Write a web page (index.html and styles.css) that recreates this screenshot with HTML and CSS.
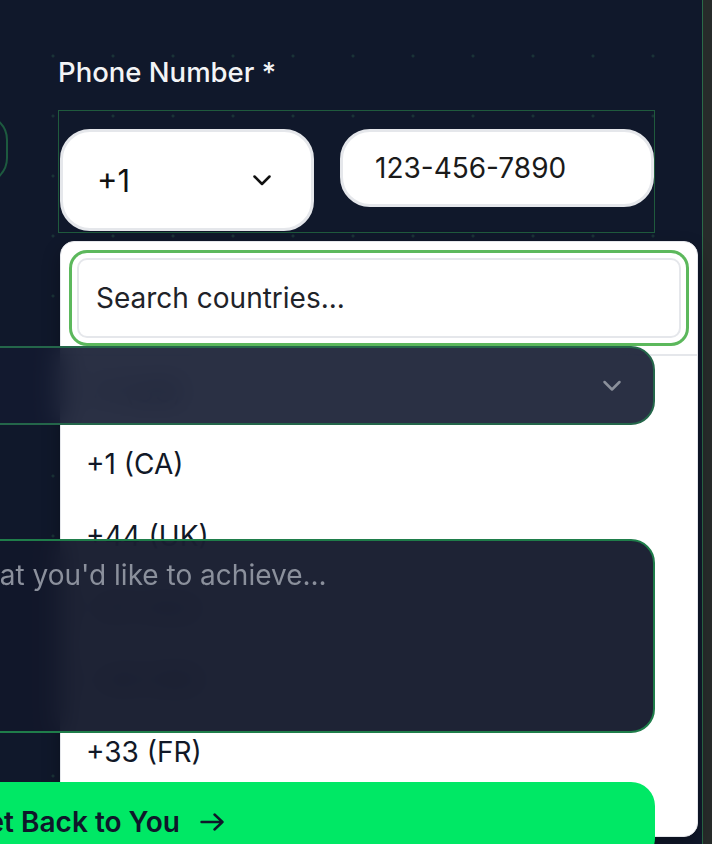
FILE: index.html
```html
<!DOCTYPE html>
<html lang="en">
<head>
<meta charset="utf-8">
<title>Contact form</title>
<link rel="stylesheet" href="styles.css">
</head>
<body>
<div class="viewport">
  <main class="canvas">
    <form class="form">
      <div class="row-two">
        <div class="field">
          <label class="label label-left">Company Name</label>
          <input class="dark-input" type="text">
        </div>
        <div class="field">
          <label class="label label-phone">Phone Number *</label>
          <div class="phone-box">
            <div class="code-wrap">
              <button type="button" class="code-btn">
                <span>+1</span>
                <svg class="chev" width="20" height="12" viewBox="0 0 20 12"><path d="M2.5 2.5 10 10l7.5-7.5" fill="none" stroke="#111" stroke-width="2.5" stroke-linecap="round" stroke-linejoin="round"/></svg>
              </button>
              <div class="dropdown">
                <div class="search-wrap">
                  <input class="search" type="text" placeholder="Search countries...">
                </div>
                <ul class="options">
                  <li>+1 (US)</li>
                  <li>+1 (CA)</li>
                  <li>+44 (UK)</li>
                  <li>+61 (AU)</li>
                  <li>+49 (DE)</li>
                  <li>+33 (FR)</li>
                </ul>
              </div>
            </div>
            <input class="phone-input" type="tel" value="123-456-7890">
          </div>
        </div>
      </div>

      <div class="field row-full row-select">
        <label class="label label-full">Service Interested In</label>
        <div class="select-dark">
          <svg width="20" height="12" viewBox="0 0 20 12"><path d="M2.5 2 10 9.5 17.5 2" fill="none" stroke="#8b909b" stroke-width="2.5" stroke-linecap="round" stroke-linejoin="round"/></svg>
        </div>
      </div>

      <div class="field row-full row-text">
        <label class="label label-full">Project Details</label>
        <textarea class="textarea-dark" placeholder="Tell us about your business goals and what you'd like to achieve..."></textarea>
      </div>

      <button type="button" class="submit">
        <span>We'll Get Back to You</span>
        <svg width="24" height="18" viewBox="0 0 24 18"><path d="M1.5 9h21M14.5 1.5 22.5 9l-8 7.5" fill="none" stroke="#0f172a" stroke-width="2.4" stroke-linecap="round" stroke-linejoin="round"/></svg>
      </button>
    </form>
  </main>
  <div class="edge"></div>
</div>
</body>
</html>
```

FILE: styles.css
```css
* { box-sizing: border-box; }

html, body {
  margin: 0;
  padding: 0;
}

body {
  background: #10182b;
  font-family: Inter, "Noto Sans", sans-serif;
  overflow: hidden;
}

.viewport {
  display: flex;
  width: 712px;
  height: 844px;
  overflow: hidden;
}

.canvas {
  flex: 1;
  position: relative;
  background-color: #10182b;
  background-image: radial-gradient(circle, rgba(40, 92, 72, 0.4) 1.1px, transparent 1.9px);
  background-size: 60px 60px;
  background-position: 23px 26px;
  padding-top: 54px;
}

.edge {
  width: 10px;
  flex: none;
  background: #272b2a;
  border-left: 1px solid #2a6a48;
}

.form {
  margin-left: -592px;
  width: 1247px;
}

.row-two {
  display: grid;
  grid-template-columns: 600px 597px;
  column-gap: 50px;
  align-items: start;
}

.field {
  display: flex;
  flex-direction: column;
}

.label {
  display: block;
  font-size: 27.5px;
  line-height: 36px;
  font-weight: 500;
  color: #f3f4f6;
}

.label-left { margin-bottom: 24px; }
.label-phone { margin-bottom: 20px; }
.label-full { margin-bottom: 20px; }

.dark-input {
  width: 100%;
  height: 70px;
  border: 2px solid #1d5a3f;
  border-radius: 26px;
  background: transparent;
  outline: none;
}

.phone-box {
  display: flex;
  align-items: flex-start;
  gap: 26px;
  border: 1px solid #1f5a3d;
  padding: 18px 0 1px 1px;
}

.code-wrap {
  position: relative;
  width: 254px;
  flex: none;
}

.code-btn {
  width: 254px;
  height: 102px;
  background: #fff;
  border: 3px solid #e5e7eb;
  border-radius: 30px;
  display: flex;
  align-items: center;
  justify-content: space-between;
  padding: 0 39px 0 34px;
  font-family: Inter, "Noto Sans", sans-serif;
  font-size: 31px;
  font-weight: 400;
  color: #111;
}

.chev { display: block; }

.phone-input {
  flex: 1;
  min-width: 0;
  height: 78px;
  background: #fff;
  border: 3px solid #e5e7eb;
  border-radius: 30px;
  padding: 0 32px;
  font-family: Inter, "Noto Sans", sans-serif;
  font-size: 28px;
  color: #1a1a1a;
  outline: none;
}

.dropdown {
  position: absolute;
  top: calc(100% + 10px);
  left: 0;
  width: 638px;
  height: 596px;
  background: #fff;
  border: 1px solid #e5e7eb;
  border-radius: 14px;
  box-shadow: 0 8px 18px rgba(0, 0, 0, 0.3);
  z-index: 1;
  overflow: hidden;
}

.search-wrap {
  padding: 16px;
  border-bottom: 2px solid #e5e7eb;
}

.search {
  display: block;
  width: 100%;
  height: 80px;
  border: 2px solid #e5e7eb;
  border-radius: 10px;
  padding: 0 17px;
  font-family: Inter, "Noto Sans", sans-serif;
  font-size: 28px;
  color: #1f2937;
  outline: none;
  box-shadow: 0 0 0 5px #fff, 0 0 0 8px #5cb85c;
}

.search::placeholder { color: #1f2329; opacity: 1; }

.options {
  list-style: none;
  margin: 0;
  padding: 0;
}

.options li {
  height: 72px;
  display: flex;
  align-items: center;
  padding-left: 25px;
  font-size: 28px;
  color: #111827;
}

.row-select { margin-top: 57px; }
.row-text { margin-top: 58px; }

.select-dark {
  position: relative;
  z-index: 2;
  height: 79px;
  border: 2px solid #24664a;
  border-radius: 24px;
  background: rgba(19, 25, 48, 0.9);
  -webkit-backdrop-filter: blur(14px);
  backdrop-filter: blur(14px);
  display: flex;
  align-items: center;
  justify-content: flex-end;
  padding-right: 31px;
}

.textarea-dark {
  position: relative;
  z-index: 2;
  display: block;
  width: 100%;
  height: 194px;
  border: 2px solid #1f7d4a;
  border-radius: 24px;
  background: rgba(18, 23, 42, 0.95);
  -webkit-backdrop-filter: blur(14px);
  backdrop-filter: blur(14px);
  padding: 13px 35px 13px 45px;
  font-family: Inter, "Noto Sans", sans-serif;
  font-size: 28px;
  line-height: 42px;
  color: #e5e7eb;
  resize: none;
  outline: none;
}

.textarea-dark::placeholder { color: #8b909c; opacity: 1; }

.submit {
  position: relative;
  z-index: 2;
  width: 100%;
  height: 80px;
  margin-top: 49px;
  border: none;
  border-radius: 24px;
  background: #00e865;
  color: #0f172a;
  font-family: Inter, "Noto Sans", sans-serif;
  font-size: 28px;
  font-weight: 600;
  display: flex;
  align-items: center;
  justify-content: flex-end;
  gap: 20px;
  padding: 0 431px 0 0;
}

.submit svg { display: block; flex: none; }
```
